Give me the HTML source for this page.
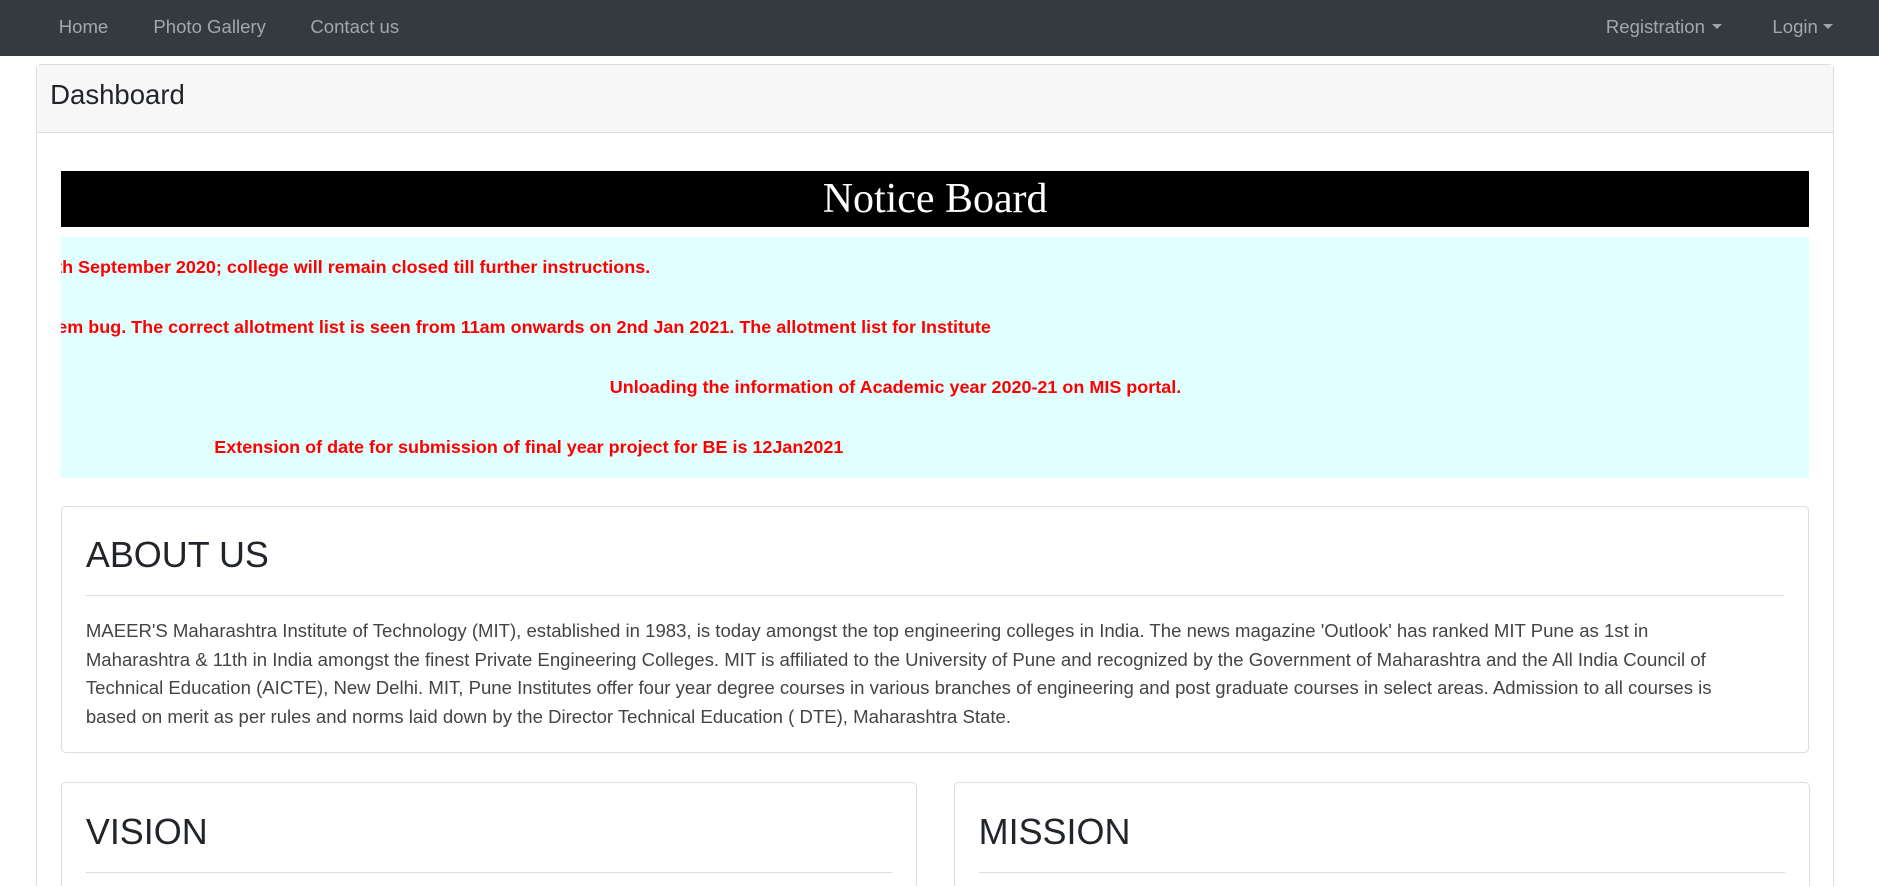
<!DOCTYPE html>
<html><head><meta charset="utf-8"><style>
html{zoom:1.1984;height:739px;overflow:hidden}
body{margin:0;font-family:"Liberation Sans",sans-serif;background:#fff;width:1568px;height:739px;overflow:hidden;color:#212529;position:relative}
.nav{height:47px;background:#343a40;position:relative}
.nav a{position:absolute;top:13px;color:rgba(255,255,255,.55);font-size:15.5px;text-decoration:none}
.caret{display:inline-block;border-top:5px solid rgba(255,255,255,.55);border-left:5px solid transparent;border-right:5px solid transparent;vertical-align:3px;margin-left:6px}
.card{position:absolute;left:30px;top:53px;width:1499px;height:800px;border:1px solid #ddd;border-radius:4px}
.hdr{height:56px;background:#f7f7f7;border-bottom:1px solid #ddd}
.hdr span{position:absolute;left:11px;top:12px;font-size:23px}
.nb{position:absolute;left:20px;top:89px;width:1459px;height:47px;background:#000;color:#fff;font-family:"Liberation Serif",serif;font-size:35px;text-align:center;line-height:47px}
.cy{position:absolute;left:20px;top:144px;width:1459px;height:201px;background:#e0ffff;overflow:hidden}
.cy div{position:absolute;color:#f00;font-weight:bold;font-size:15px;white-space:nowrap}
.box{position:absolute;border:1px solid #ddd;border-radius:4px}
.box h2{margin:0;position:absolute;left:20px;top:23px;font-size:30px;font-weight:normal}
.box hr{position:absolute;left:20px;right:20px;top:74px;margin:0;border:0;border-top:1px solid #ddd}
.box p{position:absolute;left:20px;right:20px;top:92px;margin:0;font-size:15.5px;line-height:24px;color:#444;white-space:nowrap}
</style></head><body>
<div class="nav">
<a style="left:49px">Home</a><a style="left:128px">Photo Gallery</a><a style="left:259px">Contact us</a>
<a style="left:1340px">Registration<span class="caret"></span></a><a style="left:1479px">Login<span class="caret" style="margin-left:4px"></span></a>
</div>
<div class="card">
<div class="hdr"><span>Dashboard</span></div>
<div class="nb">Notice Board</div>
<div class="cy">
<div style="left:-4px;top:17px">th September 2020; college will remain closed till further instructions.</div>
<div style="left:-3px;top:67px">em bug. The correct allotment list is seen from 11am onwards on 2nd Jan 2021. The allotment list for Institute</div>
<div style="left:458px;top:117px">Unloading the information of Academic year 2020-21 on MIS portal.</div>
<div style="left:128px;top:167px">Extension of date for submission of final year project for BE is 12Jan2021</div>
</div>
<div class="box" style="left:20px;top:368px;width:1457px;height:205px">
<h2>ABOUT US</h2><hr>
<p>MAEER'S Maharashtra Institute of Technology (MIT), established in 1983, is today amongst the top engineering colleges in India. The news magazine 'Outlook' has ranked MIT Pune as 1st in<br>Maharashtra &amp; 11th in India amongst the finest Private Engineering Colleges. MIT is affiliated to the University of Pune and recognized by the Government of Maharashtra and the All India Council of<br>Technical Education (AICTE), New Delhi. MIT, Pune Institutes offer four year degree courses in various branches of engineering and post graduate courses in select areas. Admission to all courses is<br>based on merit as per rules and norms laid down by the Director Technical Education ( DTE), Maharashtra State.</p>
</div>
<div class="box" style="left:20px;top:599px;width:713px;height:300px"><h2>VISION</h2><hr></div>
<div class="box" style="left:765px;top:599px;width:713px;height:300px"><h2>MISSION</h2><hr></div>
</div>
</body></html>
